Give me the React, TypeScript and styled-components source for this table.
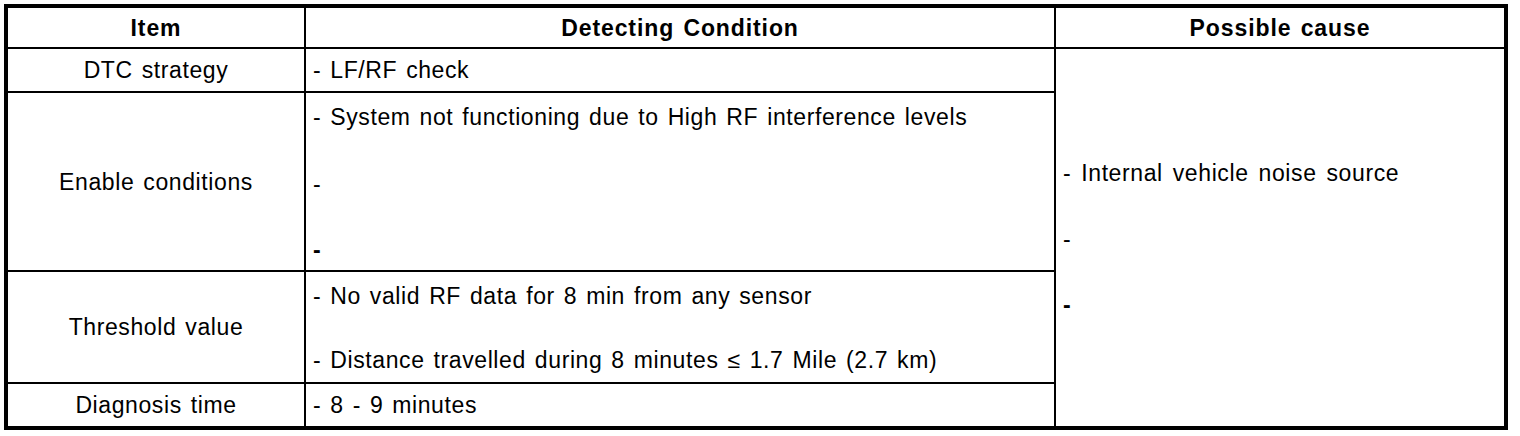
import React from "react";
import styled, { createGlobalStyle } from "styled-components";

const Global = createGlobalStyle`
  html, body {
    margin: 0;
    padding: 0;
    background: #ffffff;
  }
  body {
    font-family: "Liberation Sans", Arial, Helvetica, sans-serif;
    color: #000000;
  }
`;

const Page = styled.div`
  padding: 4px;
`;

const Table = styled.div`
  display: grid;
  width: 1504px;
  box-sizing: border-box;
  grid-template-columns: 296px 748px 448px;
  grid-template-rows: 39px 42px 177px 110px 42px;
  gap: 2px;
  padding: 4px;
  background: #000000;
  font-size: 23px;
  letter-spacing: 0.6px;
  word-spacing: 2px;
`;

const Cell = styled.div<{ $align?: "center" | "left"; $rowSpan?: number }>`
  background: #ffffff;
  display: flex;
  flex-direction: column;
  justify-content: center;
  align-items: ${(p) => (p.$align === "left" ? "flex-start" : "center")};
  padding: ${(p) => (p.$align === "left" ? "0 7px" : "0")};
  line-height: 24px;
  white-space: pre;
  ${(p) => (p.$rowSpan ? `grid-row: span ${p.$rowSpan};` : "")}
`;

const HeadCell = styled(Cell)`
  font-weight: bold;
  letter-spacing: 0.9px;
`;

const Lines = styled(Cell)<{ $top: number; $bottom: number }>`
  justify-content: space-between;
  padding-top: ${(p) => p.$top}px;
  padding-bottom: ${(p) => p.$bottom}px;
`;

const CauseCell = styled(Cell)`
  grid-column: 3;
  grid-row: 2 / span 4;
  justify-content: center;
  gap: 42px;
  padding: 2px 7px 0;
  word-spacing: 3px;
`;

const BoldDash = styled.span`
  font-weight: bold;
`;

export default function App() {
  return (
    <Page>
      <Global />
      <Table>
        <HeadCell>Item</HeadCell>
        <HeadCell>Detecting Condition</HeadCell>
        <HeadCell>Possible cause</HeadCell>

        <Cell>DTC strategy</Cell>
        <Cell $align="left">- LF/RF check</Cell>
        <CauseCell $align="left">
          <span>- Internal vehicle noise source</span>
          <span>-</span>
          <BoldDash>-</BoldDash>
        </CauseCell>

        <Cell>Enable conditions</Cell>
        <Lines $align="left" $top={12} $bottom={8}>
          <span>- System not functioning due to High RF interference levels</span>
          <span>-</span>
          <BoldDash>-</BoldDash>
        </Lines>

        <Cell>Threshold value</Cell>
        <Lines $align="left" $top={12} $bottom={10}>
          <span>- No valid RF data for 8 min from any sensor</span>
          <span>- Distance travelled during 8 minutes ≤ 1.7 Mile (2.7 km)</span>
        </Lines>

        <Cell>Diagnosis time</Cell>
        <Cell $align="left">- 8 - 9 minutes</Cell>
      </Table>
    </Page>
  );
}
